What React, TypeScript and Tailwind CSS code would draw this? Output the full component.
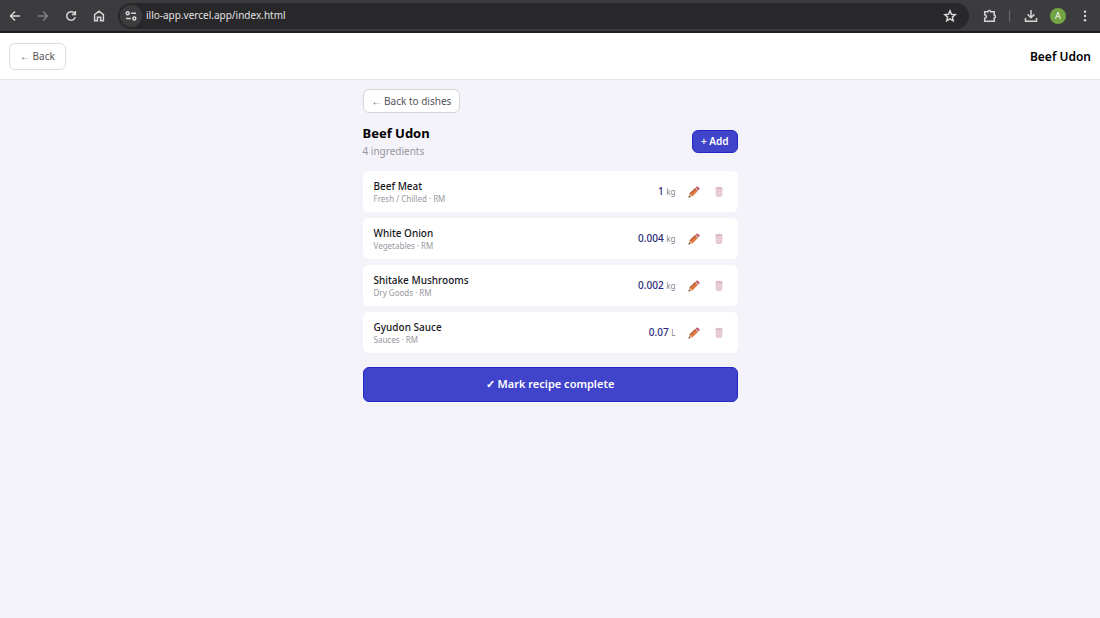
import type { ReactNode } from "react";

const ingredients = [
  { name: "Beef Meat", category: "Fresh / Chilled", amount: "1", unit: "kg" },
  { name: "White Onion", category: "Vegetables", amount: "0.004", unit: "kg" },
  { name: "Shitake Mushrooms", category: "Dry Goods", amount: "0.002", unit: "kg" },
  { name: "Gyudon Sauce", category: "Sauces", amount: "0.07", unit: "L" },
];

function Glyph({ d }: { d: string }) {
  return (
    <svg viewBox="0 0 14 14" className="size-3.5 shrink-0" fill="none" stroke="currentColor" strokeWidth="1.5">
      <path d={d} />
    </svg>
  );
}

function ToolbarButton({ label, className = "", children }: { label: string; className?: string; children: ReactNode }) {
  return (
    <button type="button" aria-label={label} className={`flex shrink-0 items-center justify-center ${className}`}>
      {children}
    </button>
  );
}

function BrowserBar() {
  return (
    <div className="flex h-[33px] items-center border-b-2 border-[#1f1e20] bg-[#3c3b3d] px-2 text-[#d6d5d7]">
      <div className="flex items-center gap-3.5">
        <ToolbarButton label="Go back">
          <Glyph d="M12 7H2.8M7 2.5 2.5 7 7 11.5" />
        </ToolbarButton>
        <ToolbarButton label="Go forward" className="text-[#7d7c7e]">
          <Glyph d="M2 7h9.2M7 2.5 11.5 7 7 11.5" />
        </ToolbarButton>
        <ToolbarButton label="Reload">
          <Glyph d="M11.2 8.1A4.3 4.3 0 1 1 10 3.8L11.2 5M11.4 1.9v3.5H7.9" />
        </ToolbarButton>
        <ToolbarButton label="Home">
          <Glyph d="M2.6 5.6 7 2.2l4.4 3.4v6.2H8.6V8.2H5.4v3.6H2.6z" />
        </ToolbarButton>
      </div>
      <div className="ml-3 flex h-[26px] min-w-0 flex-1 items-center rounded-full bg-[#282729] pr-3 pl-0.5">
        <ToolbarButton label="Site information" className="size-[22px] rounded-full bg-[#3c3b3d]">
          <svg viewBox="0 0 14 14" className="size-3.5" fill="none" stroke="currentColor" strokeWidth="1.5">
            <circle cx="3.7" cy="4.2" r="1.5" />
            <path d="M7.2 4.2h4.8M2 9.6h4.8" />
            <circle cx="10.3" cy="9.6" r="1.5" />
          </svg>
        </ToolbarButton>
        <input
          type="text"
          aria-label="Address"
          defaultValue="illo-app.vercel.app/index.html"
          className="ml-1 min-w-0 flex-1 bg-transparent text-[10px] text-[#e3e2e4] outline-none"
        />
        <ToolbarButton label="Bookmark this page">
          <Glyph d="m7 1.9 1.5 3.4 3.7.3-2.8 2.5.8 3.7L7 9.9l-3.2 1.9.8-3.7-2.8-2.500 3.7-.3z" />
        </ToolbarButton>
      </div>
      <ToolbarButton label="Extensions" className="ml-3.5">
        <Glyph d="M1.700 2.800h3.200c.2-1.700 2.700-1.700 2.900 0h3.400v3.300c1.700.2 1.700 2.600 0 2.800v3.300H1.700V9.300c2.300-.1 2.300-3.400 0-3.500z" />
      </ToolbarButton>
      <span className="ml-3 h-3 w-px bg-[#6a696b]" />
      <ToolbarButton label="Downloads" className="ml-3.5">
        <Glyph d="M7 1v7.500M3.700 5.400 7 8.700l3.300-3.300M1.500 9v3.200h11V9" />
      </ToolbarButton>
      <ToolbarButton label="Profile" className="ml-3 size-4 rounded-full bg-[#73a544] text-[9px] text-white">
        A
      </ToolbarButton>
      <ToolbarButton label="Menu" className="ml-3">
        <svg viewBox="0 0 14 14" className="size-3.5" fill="currentColor">
          <circle cx="7" cy="2.8" r="1.2" />
          <circle cx="7" cy="7" r="1.2" />
          <circle cx="7" cy="11.2" r="1.2" />
        </svg>
      </ToolbarButton>
    </div>
  );
}

function PencilIcon() {
  return (
    <svg viewBox="0 0 12 12" className="size-3">
      <path d="M.5 11.5 1.500 7.600 4.400 10.500z" fill="#e8b48c" />
      <path d="m.5 11.500.5-1.900 1.400 1.400z" fill="#4b3540" />
      <path d="m1.500 7.600 5.600-5.500 2.800 2.800-5.500 5.600z" fill="#e07a42" />
      <path d="m1.500 7.600 5.600-5.500.9.900-5.600 5.500z" fill="#b9603c" />
      <path d="m7.100 2.100.9-.9 2.800 2.800-.9.900z" fill="#a9a3b5" />
      <path d="m8 1.200.5-.5q.6-.6 1.200 0l1.600 1.600q.6.6 0 1.200l-.5.5z" fill="#d2304c" />
    </svg>
  );
}

function TrashIcon() {
  return (
    <svg viewBox="0 0 10 12" className="h-3 w-2.5" fill="none" stroke="#dcb8c4">
      <path d="M2 2.500 2.400 10q2.600 1 5.200 0L8 2.500z" fill="#f1dfe5" strokeWidth=".8" />
      <ellipse cx="5" cy="2.2" rx="3.2" ry=".9" fill="#dfc0ca" />
      <path d="M4 3.500v7M6 3.500v7M2.300 5.500h5.400M2.500 8h5" strokeWidth=".6" />
    </svg>
  );
}

export default function App() {
  return (
    <div className="min-h-screen bg-[#f4f3f9] font-['Noto_Sans','Open_Sans',sans-serif] text-[#17161c]">
      <BrowserBar />
      <header className="flex items-center justify-between border-b border-[#e6e5ea] bg-white px-[9px] pt-2.5 pb-[9px]">
        <button type="button" className="h-[27px] rounded-md border border-[#dcdbe2] bg-white px-2.5 text-[10px] text-[#555459]">
          ← Back
        </button>
        <span className="text-xs font-semibold text-black">Beef Udon</span>
      </header>

      <main className="mx-auto w-full max-w-[375px] pt-[9px]">
        <button type="button" className="block h-6 rounded-md border border-[#d6d5dc] bg-white px-2 text-[10px] text-[#555459]">
          ← Back to dishes
        </button>

        <div className="mt-2.5 flex items-center justify-between">
          <div>
            <h1 className="text-[13px] leading-5 font-bold text-black">Beef Udon</h1>
            <p className="text-[10px] leading-4 text-[#96959c]">4 ingredients</p>
          </div>
          <button type="button" className="h-[23px] rounded-md border border-[#2228c4] bg-[#4044cb] px-2 text-[10px] font-semibold text-white">
            + Add
          </button>
        </div>

        <ul className="mt-3 flex flex-col gap-1.5">
          {ingredients.map((item) => (
            <li key={item.name} className="flex h-[41px] items-center rounded-md bg-white pr-3.5 pl-[11px]">
              <div className="min-w-0 flex-1">
                <p className="text-[10px] leading-[14px] font-medium">{item.name}</p>
                <p className="text-[8px] leading-3 text-[#98979e]">{item.category} · RM</p>
              </div>
              <p className="text-[10px] font-medium text-[#282878]">
                {item.amount} <span className="text-[8px] font-normal text-[#85848b]">{item.unit}</span>
              </p>
              <button type="button" aria-label={`Edit ${item.name}`} className="ml-3">
                <PencilIcon />
              </button>
              <button type="button" aria-label={`Delete ${item.name}`} className="ml-3.5">
                <TrashIcon />
              </button>
            </li>
          ))}
        </ul>

        <button type="button" className="mt-3.5 h-[35px] w-full rounded-md border border-[#2228c4] bg-[#4044cb] text-[11px] font-semibold text-white">
          ✓ Mark recipe complete
        </button>
      </main>
    </div>
  );
}
